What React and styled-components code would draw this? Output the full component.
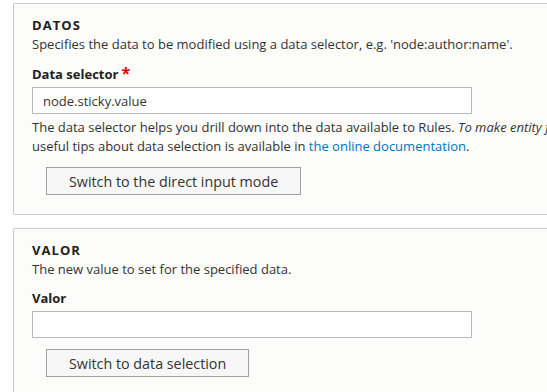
import React from 'react';
import styled, { createGlobalStyle } from 'styled-components';

const GlobalStyle = createGlobalStyle`
    html, body {
        margin: 0;
        padding: 0;
        background: #fff;
        overflow: hidden;
    }
    body {
        font-family: "Open Sans", "DejaVu Sans", sans-serif;
        font-size: 13px;
        line-height: 19px;
        color: #333;
    }
`;

const Page = styled.div`
    width: 1100px;
    padding: 3px 0 0 13px;
`;

const Fieldset = styled.section`
    background: #fcfcfa;
    border: 1px solid #c8c8c8;
    border-radius: 2px;
    padding: 12px 18px 19px 18px;
    margin-bottom: 13px;
`;

const Legend = styled.div`
    font-weight: bold;
    text-transform: uppercase;
    letter-spacing: 0.08em;
    color: #222;
`;

const Description = styled.div``;

const Label = styled.label`
    display: block;
    font-weight: bold;
    color: #222;
    margin: 10px 0 3px 0;
`;

const Required = styled.span`
    color: #e00;
    font-size: 16px;
    margin-left: 3px;
`;

const TextInput = styled.input`
    display: block;
    box-sizing: border-box;
    width: 440px;
    height: 27px;
    padding: 0 10px;
    border: 1px solid #b8b8b8;
    border-radius: 0;
    background: #fff;
    font-family: inherit;
    font-size: 13px;
    color: #333;
`;

const Help = styled.div`
    margin-top: 4px;
    white-space: nowrap;
`;

const Link = styled.a`
    color: #0074bd;
    text-decoration: none;
`;

const Button = styled.button`
    display: block;
    box-sizing: border-box;
    height: 28px;
    margin: 11px 0 0 14px;
    padding: 0 22px;
    background: #f7f7f7;
    border: 1px solid #a0a0a0;
    border-radius: 0;
    font-family: inherit;
    font-size: 14.3px;
    color: #333;
`;

export default function App () {
    return (
        <Page>
            <GlobalStyle />
            <Fieldset>
                <Legend>Datos</Legend>
                <Description>Specifies the data to be modified using a data selector, e.g. 'node:author:name'.</Description>
                <Label>Data selector<Required>*</Required></Label>
                <TextInput defaultValue="node.sticky.value" />
                <Help>
                    The data selector helps you drill down into the data available to Rules. <em>To make entity fields appear in the data selector, you may have to use the condition 'entity has field' (or 'content is of type').</em> More<br />
                    useful tips about data selection is available in <Link href="#">the online documentation</Link>.
                </Help>
                <Button>Switch to the direct input mode</Button>
            </Fieldset>
            <Fieldset>
                <Legend>Valor</Legend>
                <Description>The new value to set for the specified data.</Description>
                <Label>Valor</Label>
                <TextInput />
                <Button>Switch to data selection</Button>
            </Fieldset>
        </Page>
    )
}
